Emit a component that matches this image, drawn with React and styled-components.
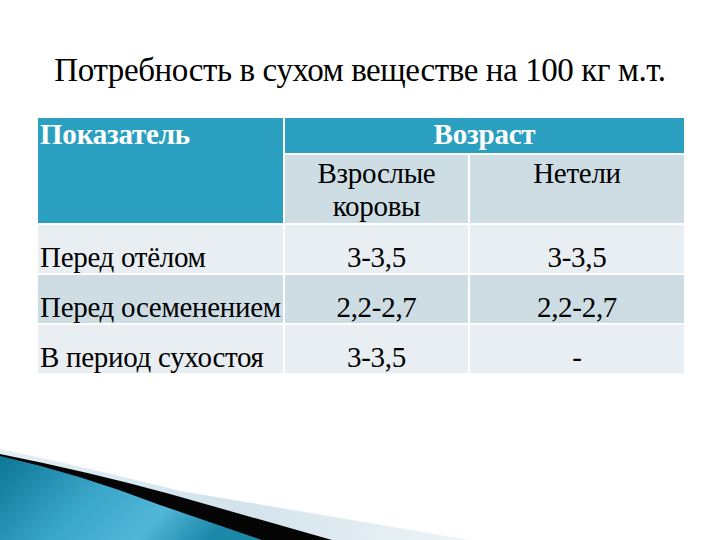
import React from "react";
import styled, { createGlobalStyle } from "styled-components";

const serif = `"Liberation Serif", serif`;

const GlobalStyle = createGlobalStyle`
  html, body {
    margin: 0;
    padding: 0;
    background: #ffffff;
  }
`;

const Slide = styled.div`
  width: 720px;
  height: 540px;
  overflow: hidden;
  display: flex;
  flex-direction: column;
  background: #ffffff;
  font-family: ${serif};
  color: #000000;
`;

const Title = styled.h1`
  margin: 52px 0 0 0;
  font-family: ${serif};
  font-size: 33px;
  font-weight: normal;
  letter-spacing: -0.4px;
  line-height: 36px;
  text-align: center;
`;

const Table = styled.table`
  margin: 28px 0 0 36px;
  width: 648px;
  border-collapse: collapse;
  table-layout: fixed;
  font-family: ${serif};
  font-size: 29px;
`;

const HeadCell = styled.th`
  background: #2b9fc0;
  color: #ffffff;
  font-family: ${serif};
  font-weight: bold;
  font-size: 29px;
  letter-spacing: -0.2px;
  text-align: ${({ $center }) => ($center ? "center" : "left")};
  vertical-align: top;
  height: 35px;
  padding: 0 2px;
  border: 2px solid #ffffff;
  line-height: 33px;
`;

const SubCell = styled.th`
  background: #cedde4;
  font-family: ${serif};
  font-size: 29px;
  font-weight: normal;
  letter-spacing: -0.3px;
  text-align: center;
  vertical-align: top;
  height: 64px;
  padding: 2px 4px 0;
  border: 2px solid #ffffff;
  line-height: 33px;
`;

const Row = styled.tr`
  background: ${({ $dark }) => ($dark ? "#cedde4" : "#e8eef1")};
`;

const Cell = styled.td`
  height: 32px;
  padding: 16px 2px 0;
  font-family: ${serif};
  font-size: 29px;
  letter-spacing: -0.3px;
  text-align: ${({ $left }) => ($left ? "left" : "center")};
  vertical-align: top;
  border: 2px solid #ffffff;
  white-space: nowrap;
  line-height: 32px;
`;

const Swoosh = styled.svg`
  display: block;
  margin-top: auto;
  flex-shrink: 0;
`;

const rows = [
  ["Перед отёлом", "3-3,5", "3-3,5"],
  ["Перед осеменением", "2,2-2,7", "2,2-2,7"],
  ["В период сухостоя", "3-3,5", "-"],
];

export default function App() {
  return (
    <>
      <GlobalStyle />
      <Slide>
        <Title>Потребность в сухом веществе на 100 кг м.т.</Title>
        <Table>
          <colgroup>
            <col style={{ width: 247 }} />
            <col style={{ width: 185 }} />
            <col style={{ width: 216 }} />
          </colgroup>
          <thead>
            <tr>
              <HeadCell rowSpan={2}>Показатель</HeadCell>
              <HeadCell colSpan={2} $center>
                Возраст
              </HeadCell>
            </tr>
            <tr>
              <SubCell>
                Взрослые
                <br />
                коровы
              </SubCell>
              <SubCell>Нетели</SubCell>
            </tr>
          </thead>
          <tbody>
            {rows.map((r, i) => (
              <Row key={r[0]} $dark={i % 2 === 1}>
                <Cell $left>{r[0]}</Cell>
                <Cell>{r[1]}</Cell>
                <Cell>{r[2]}</Cell>
              </Row>
            ))}
          </tbody>
        </Table>
        <Swoosh width="720" height="92" viewBox="0 448 720 92">
          <defs>
            <linearGradient id="teal" x1="0" y1="0" x2="1" y2="0.3">
              <stop offset="0" stopColor="#0d7595" />
              <stop offset="0.45" stopColor="#3aa6c9" />
              <stop offset="0.75" stopColor="#52b6d8" />
              <stop offset="1" stopColor="#1c88aa" />
            </linearGradient>
            <linearGradient id="pale" x1="0" y1="0" x2="1" y2="0">
              <stop offset="0" stopColor="#e4eef3" />
              <stop offset="0.5" stopColor="#d2e3ec" />
              <stop offset="1" stopColor="#eef4f7" />
            </linearGradient>
          </defs>
          <path d="M0,449 Q90,468 180,491 L470,540 L0,540 Z" fill="url(#pale)" />
          <path d="M0,454 Q90,472 170,494 L332,540 L0,540 Z" fill="#050505" />
          <path d="M0,456 Q80,474 160,505 L262,540 L0,540 Z" fill="url(#teal)" />
        </Swoosh>
      </Slide>
    </>
  );
}
